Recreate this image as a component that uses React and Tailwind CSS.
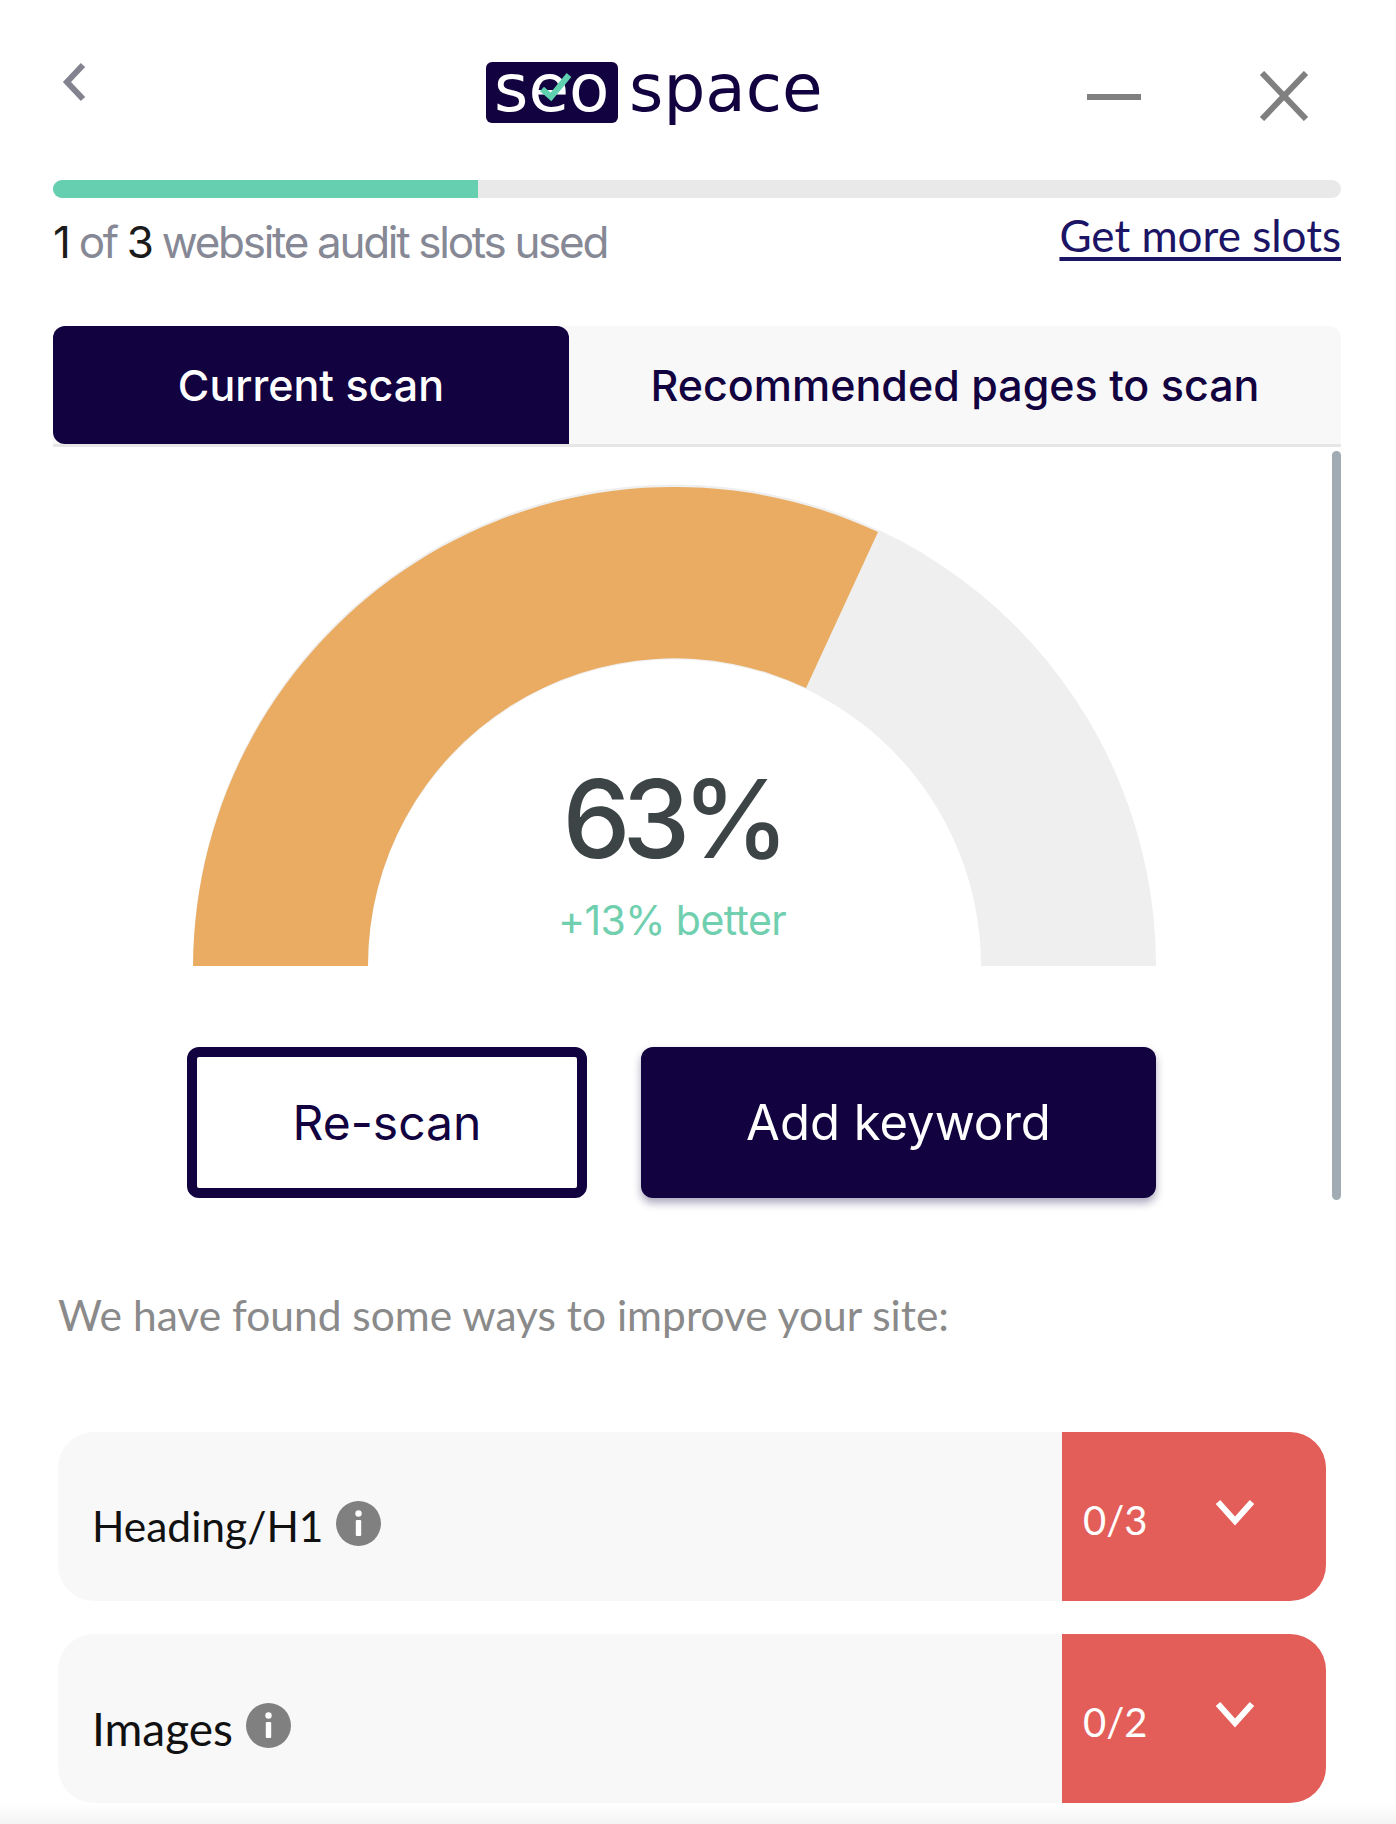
function InfoDot() {
  return (
    <svg width="45" height="45" viewBox="0 0 45 45" className="shrink-0">
      <circle cx="22.5" cy="22.5" r="22.5" fill="#808080" />
      <circle cx="22.5" cy="12.5" r="3.2" fill="#fff" />
      <rect x="19.8" y="19" width="5.4" height="16" rx="1" fill="#fff" />
    </svg>
  );
}

function ScoreRow({ label, labelClass, score, className }) {
  return (
    <div className={`flex h-[169px] w-[1268px] overflow-hidden rounded-[36px] bg-[#f8f8f8] ${className}`}>
      <div className="flex w-[1004px] items-center gap-[13px] pl-[34px] pt-[20px]">
        <span className={`leading-none text-[#111] font-['Lato',sans-serif] ${labelClass}`}>{label}</span>
        <span className="-mt-[6px]"><InfoDot /></span>
      </div>
      <div className="flex flex-1 items-start bg-[#e35e59] pl-[21px] pt-[66px] text-white">
        <span className="w-[132px] text-[40px] leading-[44px] font-['Lato',sans-serif]">{score}</span>
        <svg width="40" height="28" viewBox="0 0 40 28" className="mt-[1px]" fill="none" stroke="#fff" strokeWidth="6">
          <path d="M3 3 L20 22 L37 3" />
        </svg>
      </div>
    </div>
  );
}

export default function App() {
  return (
    <div className="relative h-[1824px] w-[1396px] overflow-hidden bg-white">
      {/* Top bar with logo and window controls */}
      <div className="flex h-[180px] pl-[62px] pt-[62px]">
        <svg width="24" height="40" viewBox="0 0 24 40" fill="none" stroke="#82838f" strokeWidth="6">
          <path d="M21 3 L5 20 L21 37" />
        </svg>
        <div className="ml-[400px] flex h-[62px] w-[340px] items-start">
          <div className="relative h-[61px] w-[132px] rounded-[6px] bg-[#12023f]">
            <span className="absolute left-[8px] top-[-13px] text-[66px] leading-[80px] text-white font-['DejaVu_Sans',sans-serif]">seo</span>
            <svg width="36" height="34" viewBox="0 0 36 34" className="absolute left-[52px] top-[8px]" fill="none" stroke="#5fd0b0" strokeWidth="6">
              <path d="M4 19 L13 27 L31 5" />
            </svg>
          </div>
          <span className="ml-[11px] -mt-[13px] text-[66px] leading-[80px] text-[#12023f] font-['DejaVu_Sans',sans-serif]">space</span>
        </div>
        <div className="ml-[261px] mt-[32px] h-[6px] w-[54px] bg-[#808080]" />
        <svg width="50" height="50" viewBox="0 0 50 50" fill="none" stroke="#808080" strokeWidth="6" className="ml-[118px] mt-[9px]">
          <path d="M3 2 L47 48 M47 2 L3 48" />
        </svg>
      </div>

      <div className="pl-[53px]">
        {/* Slots progress */}
        <div className="h-[18px] w-[1288px] overflow-hidden rounded-full bg-[#e9e9e9]">
          <div className="h-full w-[425px] bg-[#66cfb0]" />
        </div>
        <div className="mt-[12px] flex h-[48px] w-[1288px] items-start justify-between">
          <span className="mt-[7px] text-[44px] leading-[50px] text-[#868995] font-['Inter',sans-serif] tracking-[-2.3px]">
            <span className="text-[#1b1b1b]">1</span> of <span className="text-[#1b1b1b]">3</span> website audit slots used
          </span>
          <a className="text-[44px] leading-[50px] text-[#1c1464] underline underline-offset-[5px] font-['Lato',sans-serif]">Get more slots</a>
        </div>

        {/* Tabs */}
        <div className="mt-[68px] flex h-[121px] w-[1288px] rounded-t-[12px] border-b-[3px] border-[#e6e6e6] bg-[#f8f8f8]">
          <div className="flex h-[118px] w-[516px] items-center justify-center rounded-[12px] rounded-br-none bg-[#12023f] text-[43px] font-medium text-white font-['Inter',sans-serif]">
            Current scan
          </div>
          <div className="flex flex-1 items-center justify-center text-[43px] font-medium text-[#12023f] font-['Inter',sans-serif]">
            Recommended pages to scan
          </div>
        </div>

        {/* Scroll area: gauge and buttons */}
        <div className="mt-[4px] flex h-[749px] w-[1288px]">
          <div className="w-[1279px] pl-[134px] pt-[33px]">
            <div className="relative ml-[6px] h-[482px] w-[963px]">
              <svg width="963" height="482" viewBox="0 0 963 482">
                <path d="M0 482 A481.5 481.5 0 0 1 963 482 L788 482 A306.5 306.5 0 0 0 175 482 Z" fill="#efefef" />
                <path d="M0 482 A481.5 481.5 0 0 1 685 48 L613 204 A306.5 306.5 0 0 0 175 482 Z" fill="#e9ac62" />
              </svg>
              <div className="absolute left-[0px] top-[270px] w-[958px] text-center">
                <div className="text-[108px] font-medium leading-[130px] tracking-[-8px] text-[#3c4445] font-['Inter',sans-serif]">63%</div>
                <div className="mt-[11px] text-[41px] leading-[50px] tracking-[-0.6px] text-[#70cfae] font-['Inter',sans-serif]">+13% better</div>
              </div>
            </div>
            <div className="mt-[81px] flex gap-[54px]">
              <button className="h-[151px] w-[400px] rounded-[12px] border-[10px] border-[#12023f] bg-white text-[48px] text-[#12023f] font-['Inter',sans-serif]">
                Re-scan
              </button>
              <button className="h-[151px] w-[515px] rounded-[12px] bg-[#12023f] text-[49px] text-white shadow-[0_5px_8px_rgba(18,2,63,0.35)] font-['Inter',sans-serif]">
                Add keyword
              </button>
            </div>
          </div>
          <div className="h-full w-[9px] rounded-full bg-[#a0abb3]" />
        </div>

        {/* Improvements list */}
        <p className="ml-[5px] mt-[90px] text-[42.5px] leading-[50px] text-[#8a8a8a] font-['Lato',sans-serif]">
          We have found some ways to improve your site:
        </p>
        <ScoreRow label="Heading/H1" labelClass="text-[42.5px]" score="0/3" className="ml-[5px] mt-[92px]" />
        <ScoreRow label="Images" labelClass="text-[46px]" score="0/2" className="ml-[5px] mt-[33px]" />
      </div>

      <div className="absolute inset-x-0 bottom-0 h-[20px] bg-gradient-to-b from-transparent to-[#f4f4f4]" />
    </div>
  );
}
